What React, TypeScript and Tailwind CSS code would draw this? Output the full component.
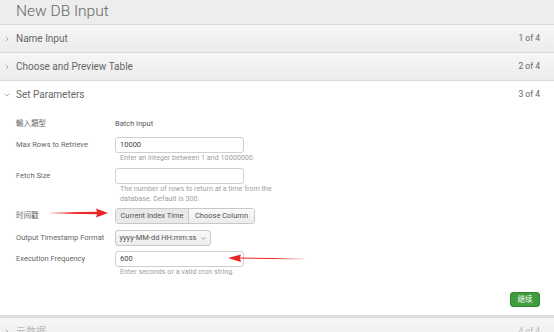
import { ChevronRight, ChevronDown } from 'lucide-react'

function StepHeader({ title, step, open = false, dim = false }: { title: string; step: string; open?: boolean; dim?: boolean }) {
  return (
    <div
      className={
        'h-[28px] flex items-center pl-[3px] pr-[14px] border-t border-[#d9d9d9] ' +
        (open ? 'bg-white' : 'bg-gradient-to-b from-[#f6f6f6] to-[#ececec]')
      }
    >
      {open ? (
        <ChevronDown className="w-[8px] h-[8px] text-[#888]" strokeWidth={2} />
      ) : (
        <ChevronRight className="w-[8px] h-[8px] text-[#888]" strokeWidth={2} />
      )}
      <span className={'ml-[5px] text-[10px] ' + (dim ? 'text-[#bbb]' : 'text-[#666]')}>{title}</span>
      <span className={'ml-auto text-[8.5px] ' + (dim ? 'text-[#bbb]' : 'text-[#666]')}>{step}</span>
    </div>
  )
}

function Label({ children }: { children: React.ReactNode }) {
  return <div className="w-[99px] shrink-0 text-[7.5px] text-[#666]">{children}</div>
}

function TextBox({ value }: { value?: string }) {
  return (
    <div className="w-[129px] h-[16px] rounded-[3px] border border-[#cfcfcf] bg-white flex items-center px-[4px] text-[7.5px] text-[#444]">
      {value}
    </div>
  )
}

function Help({ children }: { children: React.ReactNode }) {
  return <div className="ml-[99px] pl-[5px] text-[7.2px] leading-[10px] text-[#a0a0a0] w-[165px]">{children}</div>
}

export default function App(): React.ReactElement {
  return (
    <div className="relative w-[554px] h-[332px] overflow-hidden bg-white font-['Roboto','Noto_Sans_CJK_SC',sans-serif]">
      {/* Title */}
      <div className="h-[24px] bg-[#ededed] flex items-center pl-[16px]">
        <h1 className="text-[15.5px] font-light text-[#666]">New DB Input</h1>
      </div>

      <StepHeader title="Name Input" step="1 of 4" />
      <StepHeader title="Choose and Preview Table" step="2 of 4" />
      <StepHeader title="Set Parameters" step="3 of 4" open />

      {/* Parameters */}
      <div className="h-[207px] pl-[16px] pr-[14px] flex flex-col">
        <div className="mt-[11px] h-[10px] flex items-center">
          <Label>輸入類型</Label>
          <span className="text-[7.5px] text-[#555]">Batch Input</span>
        </div>

        <div className="mt-[8px] flex items-center">
          <Label>Max Rows to Retrieve</Label>
          <TextBox value="10000" />
        </div>
        <Help>Enter an integer between 1 and 10000000.</Help>

        <div className="mt-[5px] flex items-center">
          <Label>Fetch Size</Label>
          <TextBox />
        </div>
        <Help>The number of rows to return at a time from the database. Default is 300.</Help>

        <div className="mt-[4px] flex items-center">
          <Label>时间戳</Label>
          <div className="flex h-[16px] rounded-[3px] border border-[#c8c8c8] overflow-hidden text-[7.5px] text-[#555]">
            <div className="w-[73px] flex items-center justify-center bg-[#e9e9e9] border-r border-[#c8c8c8]">Current Index Time</div>
            <div className="w-[65px] flex items-center justify-center bg-gradient-to-b from-[#fafafa] to-[#ececec]">Choose Column</div>
          </div>
        </div>

        <div className="mt-[6px] flex items-center">
          <Label>Output Timestamp Format</Label>
          <div className="w-[96px] h-[16px] rounded-[3px] border border-[#c8c8c8] bg-gradient-to-b from-[#fafafa] to-[#ececec] flex items-center justify-center gap-[3px] text-[7.5px] text-[#555]">
            yyyy-MM-dd HH:mm:ss
            <ChevronDown className="w-[7px] h-[7px] text-[#666]" strokeWidth={2} />
          </div>
        </div>

        <div className="mt-[5px] flex items-center">
          <Label>Execution Frequency</Label>
          <TextBox value="600" />
        </div>
        <Help>Enter seconds or a valid cron string.</Help>

        <div className="mt-[15px] flex justify-end">
          <button className="w-[30px] h-[15px] rounded-[3px] bg-[#3f9c3f] border border-[#338533] text-white text-[7.5px] flex items-center justify-center">
            继续
          </button>
        </div>
      </div>

      <div className="border-t-2 border-[#dedede]">
        <StepHeader title="元数据" step="4 of 4" dim />
      </div>

      {/* Red annotation arrows */}
      <svg className="absolute left-0 top-0 pointer-events-none" width="554" height="332">
        <defs>
          <linearGradient id="a1" x1="0" x2="1" y1="0" y2="0">
            <stop offset="0" stopColor="#f23a3a" stopOpacity="0.3" />
            <stop offset="0.4" stopColor="#ee2a2a" />
            <stop offset="1" stopColor="#e82222" />
          </linearGradient>
          <linearGradient id="a2" x1="1" x2="0" y1="0" y2="0">
            <stop offset="0" stopColor="#f23a3a" stopOpacity="0.2" />
            <stop offset="0.4" stopColor="#ee2a2a" />
            <stop offset="1" stopColor="#e82222" />
          </linearGradient>
        </defs>
        <polygon points="50,212.6 97,211.8 96,208.5 108,213 96,217.5 97,214.2 50,213.4" fill="url(#a1)" />
        <polygon points="305,258.6 240,257.6 241,254.5 228,258 241,262 240,258.6 305,259.4" fill="url(#a2)" />
      </svg>
    </div>
  )
}
